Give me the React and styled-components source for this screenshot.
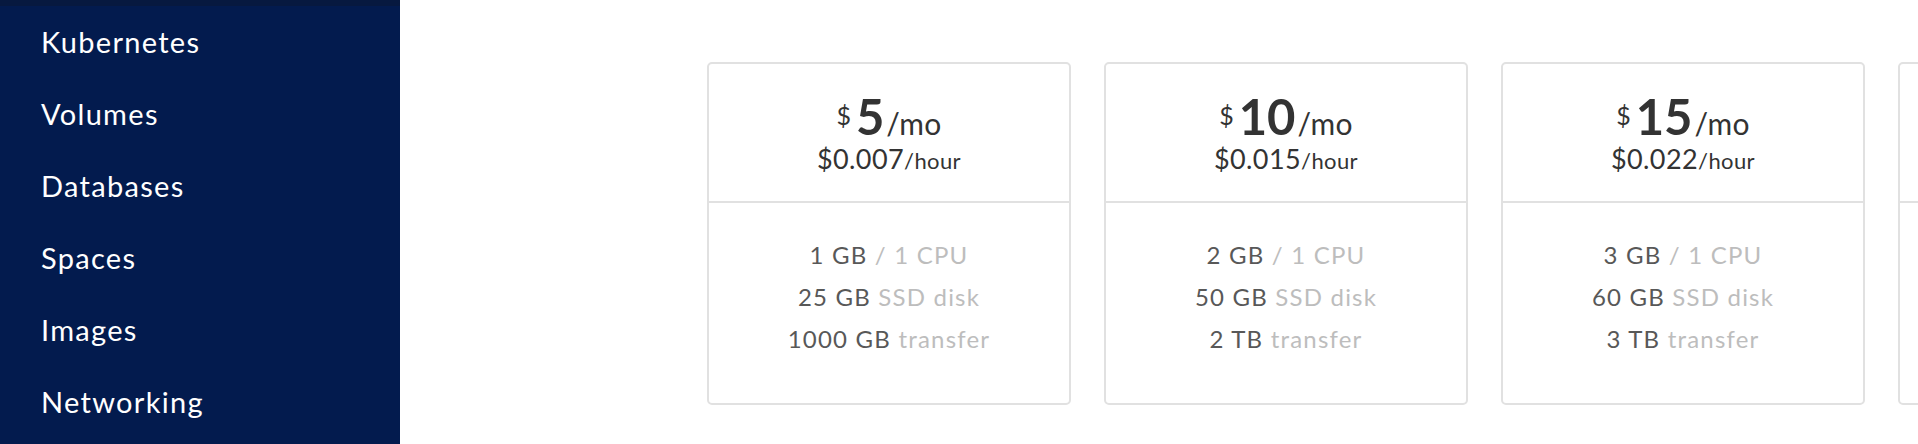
import React from "react";
import styled, { createGlobalStyle } from "styled-components";

const Global = createGlobalStyle`
  html, body { margin: 0; padding: 0; background: #fff; }
  body { font-family: "Lato", "Open Sans", sans-serif; overflow: hidden; }
  #root { height: 444px; }
`;

const Page = styled.div`
  display: flex;
  height: 444px;
  width: 1918px;
  overflow: hidden;
`;

const Sidebar = styled.nav`
  flex: 0 0 400px;
  background: #031b4e;
  display: flex;
  flex-direction: column;
  border-top: 6px solid #07193f;
`;

const NavList = styled.ul`
  list-style: none;
  margin: 0;
  padding: 0 0 0 41px;
  display: flex;
  flex-direction: column;
`;

const NavItem = styled.li`
  color: #fff;
  font-size: 29px;
  line-height: 72px;
  height: 72px;
  letter-spacing: 1.3px;
`;

const Main = styled.main`
  flex: 1;
  display: flex;
  gap: 33px;
  padding: 62px 0 0 307px;
  overflow: hidden;
`;

const Card = styled.div`
  flex: 0 0 364px;
  height: 343px;
  box-sizing: border-box;
  border: 2px solid #e1e1e1;
  border-radius: 5px;
  display: flex;
  flex-direction: column;
  color: #333;
`;

const CardHead = styled.div`
  height: 139px;
  border-bottom: 2px solid #e1e1e1;
  display: flex;
  flex-direction: column;
  align-items: center;
  padding-top: 28px;
  box-sizing: border-box;
`;

const Price = styled.div`
  display: flex;
  align-items: baseline;
  line-height: 48px;
  height: 48px;
`;

const Dollar = styled.span`
  font-size: 25px;
  line-height: 30px;
  align-self: flex-start;
  margin-top: 8px;
  margin-right: 5px;
`;

const Amount = styled.span`
  font-size: 49px;
  font-weight: 700;
  letter-spacing: 0;
`;

const Per = styled.span`
  font-size: 30px;
  margin-left: 2px;
  letter-spacing: 0.3px;
`;

const Hourly = styled.div`
  font-size: 27px;
  line-height: 34px;
  margin-top: 2px;
  letter-spacing: 0.4px;
`;

const HourUnit = styled.span`
  font-size: 22px;
`;

const CardBody = styled.div`
  display: flex;
  flex-direction: column;
  align-items: center;
  padding-top: 31px;
`;

const Spec = styled.div`
  font-size: 24px;
  line-height: 42px;
  color: #585858;
  letter-spacing: 1.2px;
`;

const Muted = styled.span`
  color: #bdbdbd;
`;

const nav = ["Kubernetes", "Volumes", "Databases", "Spaces", "Images", "Networking"];

const plans = [
  { mo: "5", hr: "$0.007", ram: "1 GB", cpu: "1 CPU", disk: "25 GB", xfer: "1000 GB" },
  { mo: "10", hr: "$0.015", ram: "2 GB", cpu: "1 CPU", disk: "50 GB", xfer: "2 TB" },
  { mo: "15", hr: "$0.022", ram: "3 GB", cpu: "1 CPU", disk: "60 GB", xfer: "3 TB" },
  { mo: "20", hr: "$0.030", ram: "4 GB", cpu: "2 CPUs", disk: "80 GB", xfer: "4 TB" },
];

export default function App() {
  return (
    <>
      <Global />
      <Page>
        <Sidebar>
          <NavList>
            {nav.map((n) => (
              <NavItem key={n}>{n}</NavItem>
            ))}
          </NavList>
        </Sidebar>
        <Main>
          {plans.map((p) => (
            <Card key={p.mo}>
              <CardHead>
                <Price>
                  <Dollar>$</Dollar>
                  <Amount>{p.mo}</Amount>
                  <Per>/mo</Per>
                </Price>
                <Hourly>
                  {p.hr}
                  <HourUnit>/hour</HourUnit>
                </Hourly>
              </CardHead>
              <CardBody>
                <Spec>
                  {p.ram} <Muted>/ {p.cpu}</Muted>
                </Spec>
                <Spec>
                  {p.disk} <Muted>SSD disk</Muted>
                </Spec>
                <Spec>
                  {p.xfer} <Muted>transfer</Muted>
                </Spec>
              </CardBody>
            </Card>
          ))}
        </Main>
      </Page>
    </>
  );
}
